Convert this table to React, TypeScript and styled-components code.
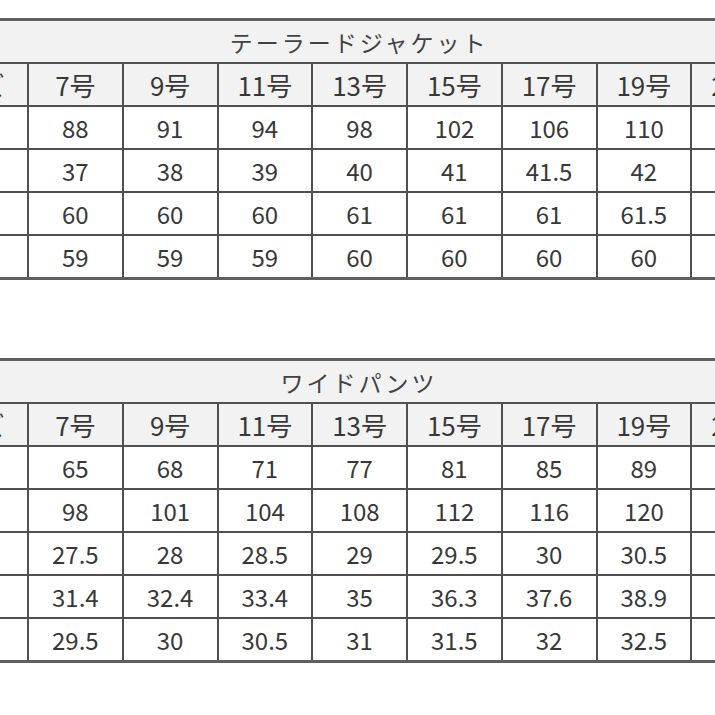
import React from 'react';
import styled, { createGlobalStyle } from 'styled-components';

const GlobalStyle = createGlobalStyle`
  html, body {
    margin: 0;
    padding: 0;
    background: #ffffff;
  }
  body {
    font-family: "Noto Sans CJK JP", "Noto Sans", sans-serif;
    color: #3a3a3a;
  }
`;

const Page = styled.div`
  width: 715px;
  height: 715px;
  overflow: hidden;
  padding-top: 18px;
  box-sizing: border-box;
  display: flex;
  flex-direction: column;
  gap: 78px;
`;

const Table = styled.table`
  margin-left: -97px;
  width: 882px;
  flex-shrink: 0;
  border-collapse: collapse;
  table-layout: fixed;
  border-top: 3px solid #5f5f5f;
  border-bottom: 3px solid #5f5f5f;
`;

const LabelCol = styled.col`
  width: 124px;
`;

const SizeCol = styled.col`
  width: 94.75px;
`;

const TitleCell = styled.th`
  height: 41px;
  padding: 0 0 0 28px;
  background: #f2f2f2;
  border-bottom: 2px solid #505050;
  font-size: 23px;
  font-weight: 400;
  letter-spacing: 3px;
  text-align: center;
  color: #424242;
`;

const HeadCell = styled.th`
  height: 41px;
  padding: 0;
  background: #f2f2f2;
  border: 2px solid #505050;
  border-top: none;
  font-size: 26px;
  font-weight: 400;
  text-align: center;
  color: #383838;
  white-space: nowrap;
`;

const Cell = styled.td`
  height: 41px;
  padding: 0;
  background: #ffffff;
  border: 2px solid #505050;
  font-size: 24px;
  text-align: center;
  color: #383838;
  white-space: nowrap;
`;

const sizes = ['7号', '9号', '11号', '13号', '15号', '17号', '19号', '21号'];

type Chart = {
  title: string;
  corner: string;
  rows: { label: string; values: string[] }[];
};

const charts: Chart[] = [
  {
    title: 'テーラードジャケット',
    corner: 'サイズ',
    rows: [
      { label: '胸囲', values: ['88', '91', '94', '98', '102', '106', '110', '114'] },
      { label: '肩幅', values: ['37', '38', '39', '40', '41', '41.5', '42', '42.5'] },
      { label: '袖丈', values: ['60', '60', '60', '61', '61', '61', '61.5', '62'] },
      { label: '着丈', values: ['59', '59', '59', '60', '60', '60', '60', '60'] },
    ],
  },
  {
    title: 'ワイドパンツ',
    corner: 'サイズ',
    rows: [
      { label: '胴囲', values: ['65', '68', '71', '77', '81', '85', '89', '93'] },
      { label: '腰囲', values: ['98', '101', '104', '108', '112', '116', '120', '124'] },
      { label: '股上', values: ['27.5', '28', '28.5', '29', '29.5', '30', '30.5', '31'] },
      { label: 'ワタリ', values: ['31.4', '32.4', '33.4', '35', '36.3', '37.6', '38.9', '40.2'] },
      { label: '裾幅', values: ['29.5', '30', '30.5', '31', '31.5', '32', '32.5', '33'] },
    ],
  },
];

const SizeTable = ({ chart }: { chart: Chart }) => (
  <Table>
    <colgroup>
      <LabelCol />
      {sizes.map((s) => (
        <SizeCol key={s} />
      ))}
    </colgroup>
    <thead>
      <tr>
        <TitleCell colSpan={9}>{chart.title}</TitleCell>
      </tr>
      <tr>
        <HeadCell>{chart.corner}</HeadCell>
        {sizes.map((s) => (
          <HeadCell key={s}>{s}</HeadCell>
        ))}
      </tr>
    </thead>
    <tbody>
      {chart.rows.map((row) => (
        <tr key={row.label}>
          <Cell>{row.label}</Cell>
          {row.values.map((v, i) => (
            <Cell key={i}>{v}</Cell>
          ))}
        </tr>
      ))}
    </tbody>
  </Table>
);

export default function App() {
  return (
    <>
      <GlobalStyle />
      <Page>
        {charts.map((c) => (
          <SizeTable key={c.title} chart={c} />
        ))}
      </Page>
    </>
  );
}
